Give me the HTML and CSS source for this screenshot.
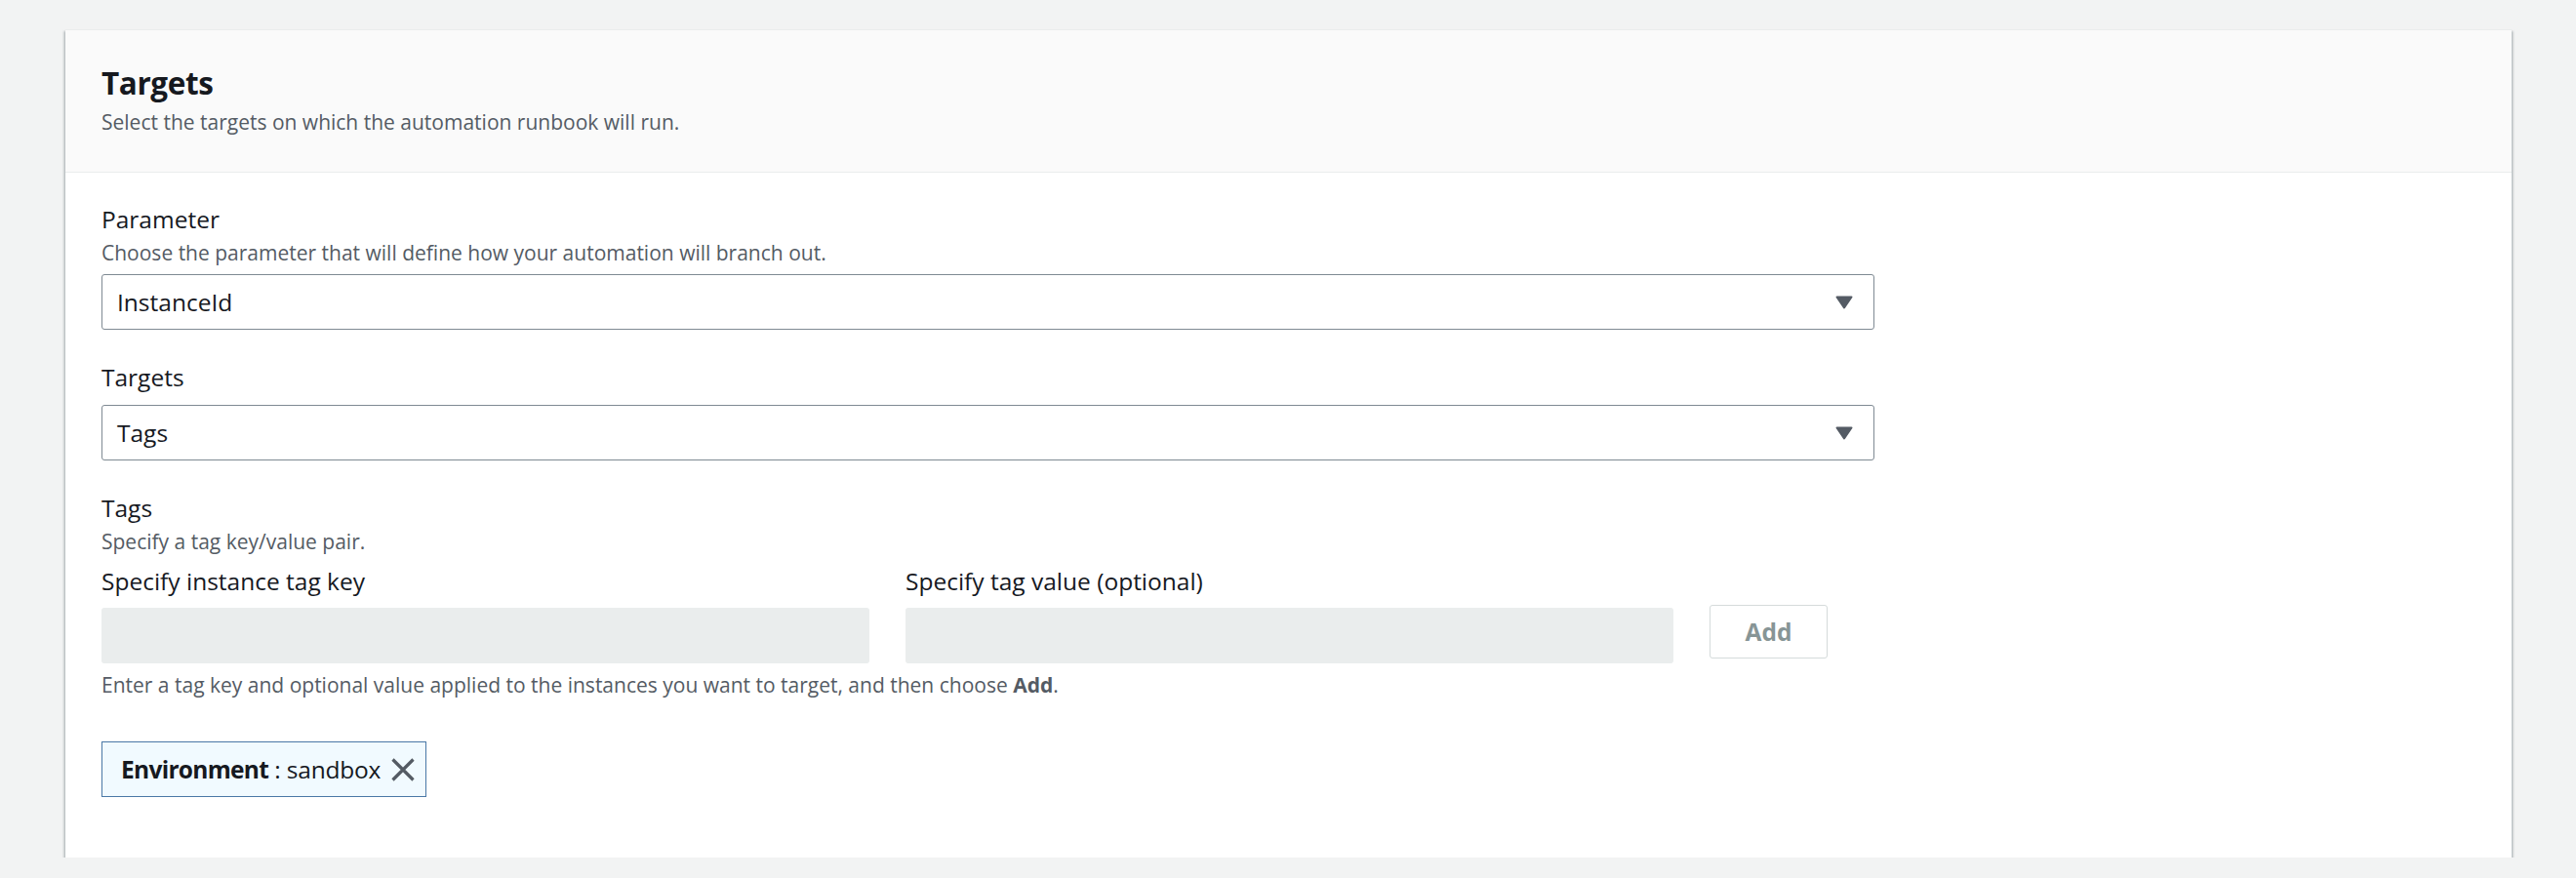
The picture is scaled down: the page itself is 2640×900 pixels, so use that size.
FILE: index.html
```html
<!DOCTYPE html>
<html lang="en">
<head>
<meta charset="utf-8">
<title>Targets</title>
<link rel="stylesheet" href="styles.css">
</head>
<body>
<div class="page">
  <section class="card">
    <header class="card-header">
      <h2 class="card-title">Targets</h2>
      <p class="card-desc">Select the targets on which the automation runbook will run.</p>
    </header>
    <div class="card-body">
      <div class="field">
        <div class="label">Parameter</div>
        <div class="desc">Choose the parameter that will define how your automation will branch out.</div>
        <div class="select select-desc">
          <span class="select-value">InstanceId</span>
          <svg class="caret" width="18" height="14" viewBox="0 0 18 14"><polygon points="1.5,1.5 16.5,1.5 9,12.5" fill="#545b64" stroke="#545b64" stroke-width="2" stroke-linejoin="round"/></svg>
        </div>
      </div>
      <div class="field">
        <div class="label">Targets</div>
        <div class="select">
          <span class="select-value">Tags</span>
          <svg class="caret" width="18" height="14" viewBox="0 0 18 14"><polygon points="1.5,1.5 16.5,1.5 9,12.5" fill="#545b64" stroke="#545b64" stroke-width="2" stroke-linejoin="round"/></svg>
        </div>
      </div>
      <div class="field">
        <div class="label">Tags</div>
        <div class="desc">Specify a tag key/value pair.</div>
        <div class="tag-grid">
          <div class="label sub-label">Specify instance tag key</div>
          <div class="label sub-label">Specify tag value (optional)</div>
          <div></div>
          <div class="input-disabled"></div>
          <div class="input-disabled"></div>
          <div class="btn-add">Add</div>
        </div>
        <div class="hint">Enter a tag key and optional value applied to the instances you want to target, and then choose <b>Add</b>.</div>
      </div>
      <div class="tokens">
        <div class="token">
          <span class="token-text"><b>Environment</b> : sandbox</span>
          <svg class="token-x" width="24" height="24" viewBox="0 0 24 24"><path d="M1.5 1.5 L22.5 22.5 M22.5 1.5 L1.5 22.5" stroke="#545b64" stroke-width="3.2" fill="none"/></svg>
        </div>
      </div>
    </div>
  </section>
</div>
</body>
</html>
```
FILE: styles.css
```css
* { box-sizing: border-box; }
html, body {
  margin: 0;
  padding: 0;
  background: #f2f3f3;
}
body {
  font-family: "Open Sans", "Noto Sans", "Liberation Sans", sans-serif;
  color: #16191f;
}
.page {
  padding: 30px 66px 0 67px;
}
.card {
  background: #ffffff;
  box-shadow: 0 2px 2px 0 rgba(0, 28, 36, 0.3), 2px 2px 2px 0 rgba(0, 28, 36, 0.15), -2px 2px 2px 0 rgba(0, 28, 36, 0.15);
  border-top: 1px solid #eaeded;
}
.card-header {
  background: #fafafa;
  border-bottom: 1px solid #eaeded;
  padding: 33px 37px 37px 37px;
}
.card-title {
  margin: 0;
  font-size: 31.5px;
  line-height: 42px;
  font-weight: 700;
  letter-spacing: -0.4px;
  color: #16191f;
}
.card-desc {
  margin: 5px 0 0 0;
  font-size: 21px;
  line-height: 28px;
  color: #545b64;
}
.card-body {
  padding: 29px 37px 62px 37px;
}
.field + .field {
  margin-top: 30px;
}
.label {
  font-size: 24.5px;
  line-height: 38px;
  color: #16191f;
}
.desc {
  margin-top: 1px;
  font-size: 21px;
  line-height: 28px;
  color: #545b64;
}
.select {
  margin-top: 9px;
  width: 1817px;
  height: 57px;
  border: 1px solid #7f8a93;
  border-radius: 3px;
  background: #fff;
  display: flex;
  align-items: center;
  justify-content: space-between;
  padding: 0 21px 0 15px;
}
.select-desc {
  margin-top: 8px;
}
.select-value {
  font-size: 24.5px;
  line-height: 38px;
  color: #16191f;
}
.caret {
  display: block;
  margin-top: 1px;
}
.tag-grid {
  margin-top: 8px;
  display: grid;
  grid-template-columns: 787px 787px 121px;
  column-gap: 37px;
  row-gap: 8px;
}
.input-disabled {
  height: 57px;
  background: #eaeded;
  border-radius: 3px;
}
.btn-add {
  margin-top: -3px;
  height: 55px;
  border: 1px solid #d5dbdb;
  border-radius: 3px;
  background: #fff;
  color: #879596;
  font-weight: 700;
  font-size: 24.5px;
  display: flex;
  align-items: center;
  justify-content: center;
}
.hint {
  margin-top: 8px;
  font-size: 21px;
  line-height: 28px;
  color: #545b64;
}
.hint b {
  font-weight: 700;
}
.tokens {
  margin-top: 44px;
  display: flex;
}
.token {
  height: 57px;
  display: flex;
  align-items: center;
  background: #f1faff;
  border: 1px solid #4a78a6;
  padding: 0 11px 0 19px;
}
.token-text {
  font-size: 24.5px;
  line-height: 38px;
  color: #16191f;
  margin-top: 1px;
  letter-spacing: -0.2px;
}
.token-text b {
  font-weight: 700;
  letter-spacing: -0.7px;
}
.token-x {
  display: block;
  margin-left: 11px;
  margin-top: 1px;
}
```
